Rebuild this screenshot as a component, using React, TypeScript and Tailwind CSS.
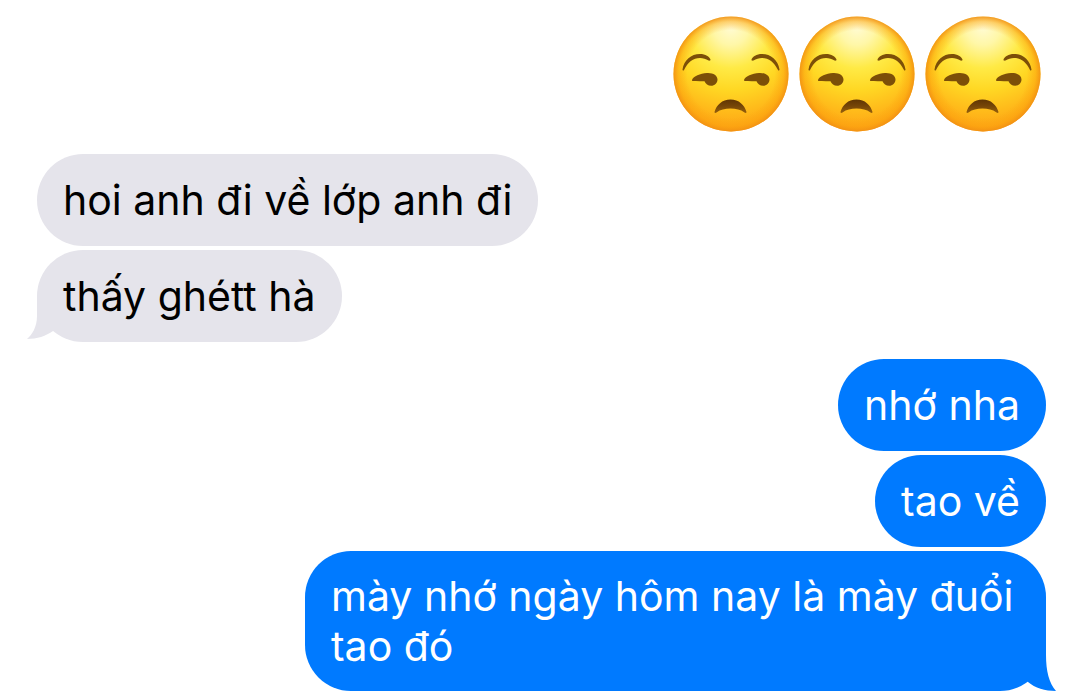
import clsx from "clsx";

interface Message {
	text: string;
	sent: boolean;
	tail?: boolean;
}

interface MessageGroup {
	id: string;
	messages: Message[];
}

const GROUPS: MessageGroup[] = [
	{
		id: "received",
		messages: [
			{ text: "hoi anh đi về lớp anh đi", sent: false },
			{ text: "thấy ghétt hà", sent: false, tail: true },
		],
	},
	{
		id: "sent",
		messages: [
			{ text: "nhớ nha", sent: true },
			{ text: "tao về", sent: true },
			{
				text: "mày nhớ ngày hôm nay là mày đuổi tao đó",
				sent: true,
				tail: true,
			},
		],
	},
];

function UnamusedFace({ id }: { id: string }) {
	return (
		<svg
			role="img"
			aria-label="Unamused face"
			viewBox="0 0 120 120"
			className="size-[120px]"
		>
			<defs>
				<radialGradient id={`${id}-skin`} cx="0.5" cy="0.1" r="0.92">
					<stop offset="0" stopColor="#fffbd2" />
					<stop offset="0.16" stopColor="#fff7a8" />
					<stop offset="0.38" stopColor="#ffea45" />
					<stop offset="0.58" stopColor="#ffd824" />
					<stop offset="0.8" stopColor="#ffb91a" />
					<stop offset="1" stopColor="#fd9f14" />
				</radialGradient>
				<radialGradient id={`${id}-rim`} cx="0.5" cy="0.5" r="0.5">
					<stop offset="0.76" stopColor="#fb9f0c" stopOpacity="0" />
					<stop offset="0.91" stopColor="#fb9f0c" stopOpacity="0.45" />
					<stop offset="1" stopColor="#f18f14" stopOpacity="0.9" />
				</radialGradient>
				<linearGradient id={`${id}-mouth`} x1="0" y1="0" x2="0" y2="1">
					<stop offset="0" stopColor="#5f3504" />
					<stop offset="0.5" stopColor="#764607" />
					<stop offset="1" stopColor="#96600c" />
				</linearGradient>
			</defs>
			<circle cx="60" cy="60" r="57.5" fill={`url(#${id}-skin)`} />
			<circle cx="60" cy="60" r="57.5" fill={`url(#${id}-rim)`} />

			{/* Brows */}
			<g fill="#7c4f08">
				<path d="M11.5 55.5C13 46 20 40 29 40C34.5 40 38.5 42.5 39.5 45.5C39.5 46.8 38.5 46.8 37.5 46.5C35 45 32 44 29 44C22 44 17 48 13 56C12.500 57 11.500 56.500 11.500 55.500Z" />
				<path d="M108.500 55.500C107 46 100 40 91 40C85.500 40 81.500 42.500 80.500 45.500C80.500 46.800 81.500 46.800 82.500 46.500C85 45 88 44 91 44C98 44 103 48 107 56C107.500 57 108.500 56.500 108.500 55.500Z" />
			</g>

			{/* Eyes */}
			<g fill="#7c4f08">
				<path d="M21 66C22.500 62 29 59.500 36 59C42 58.600 46.500 61.500 46.500 65.500C46.500 69 43.500 71.800 40.200 71.800C37 71.800 34.500 70 33.500 67.300C29 67 25 66.700 22 67C21.300 67 20.800 66.600 21 66Z" />
				<path d="M73 66C74.500 62 81 59.500 88 59C94 58.600 98.500 61.500 98.500 65.500C98.500 69 95.500 71.800 92.200 71.800C89 71.800 86.500 70 85.500 67.300C81 67 77 66.700 74 67C73.300 67 72.800 66.600 73 66Z" />
			</g>

			<path
				d="M43.500 98C45.500 91 51 85.500 59.500 85.500C68 85.500 73.500 91 75.500 98C75.500 99.200 74.500 99.200 73.500 98.500C69.500 95.500 65 94.500 59.500 94.500C54 94.500 49.500 95.500 45.500 98.500C44.500 99.200 43.500 99.200 43.500 98Z"
				fill={`url(#${id}-mouth)`}
			/>
		</svg>
	);
}

function ReceivedTail() {
	return (
		<svg
			aria-hidden="true"
			viewBox="0 0 40 46"
			className="absolute bottom-0 -left-2.5 h-[46px] w-10 fill-[#e5e4eb]"
		>
			<path d="M10 0V20C10 31 5 39 0 43C10 43 19 40 26 35L40 20V0Z" />
		</svg>
	);
}

function SentTail() {
	return (
		<svg
			aria-hidden="true"
			viewBox="0 0 40 46"
			className="absolute -right-2.5 bottom-0 h-[46px] w-10 fill-[#007aff]"
		>
			<path d="M30 0V10C30 26 33 38 40 46C29 46 19 43 12 37L0 24V0Z" />
		</svg>
	);
}

function Bubble({ text, sent, tail }: Message) {
	return (
		<li
			className={clsx(
				"relative flex min-h-[92px] max-w-[741px] items-center rounded-[46px] px-[26px] py-5",
				sent
					? "self-end bg-[#007aff] text-white"
					: "self-start bg-[#e5e4eb] text-black"
			)}
		>
			{tail && (sent ? <SentTail /> : <ReceivedTail />)}
			<p className="relative">{text}</p>
		</li>
	);
}

export default function App() {
	return (
		<main className="min-h-screen bg-white pt-3.5 pr-[34px] pb-1.5 pl-[37px] font-['Inter',sans-serif] text-[41px] leading-[50px]">
			<div className="mb-5 flex justify-end gap-1.5 pr-[3px]">
				<UnamusedFace id="face-1" />
				<UnamusedFace id="face-2" />
				<UnamusedFace id="face-3" />
			</div>
			<div className="flex flex-col gap-[17px]">
				{GROUPS.map((group) => (
					<ul key={group.id} className="flex flex-col gap-1">
						{group.messages.map((message) => (
							<Bubble key={message.text} {...message} />
						))}
					</ul>
				))}
			</div>
		</main>
	);
}
